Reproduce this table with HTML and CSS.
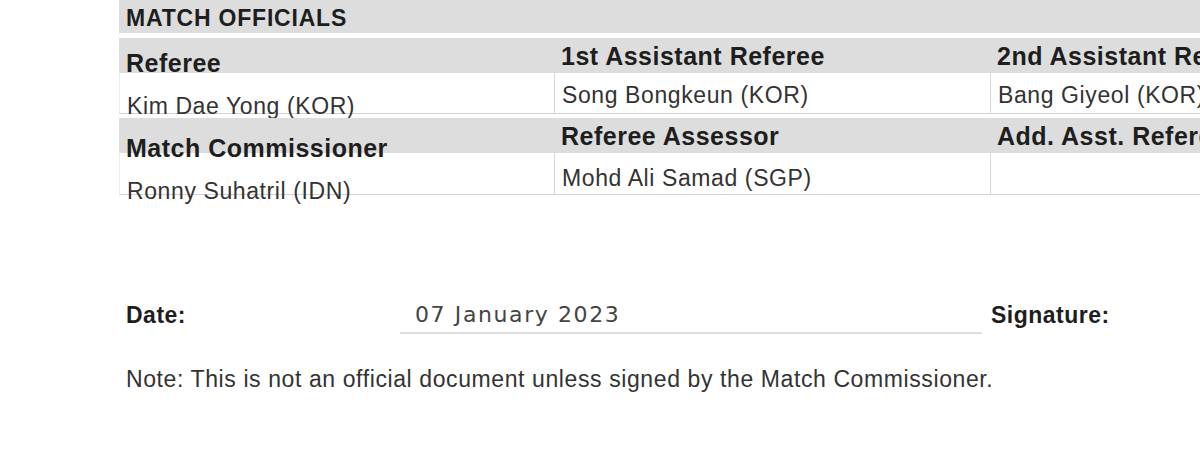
FILE: index.html
```html
<!DOCTYPE html>
<html lang="en">
<head>
<meta charset="utf-8">
<title>Match Officials</title>
<link rel="stylesheet" href="styles.css">
</head>
<body>
<div class="page">
  <div class="sheet">
    <div class="section-title">MATCH OFFICIALS</div>
    <div class="officials officials-first">
      <div class="hd c1">Referee</div>
      <div class="hd">1st Assistant Referee</div>
      <div class="hd">2nd Assistant Referee</div>
      <div class="dt c1">Kim Dae Yong (KOR)</div>
      <div class="dt">Song Bongkeun (KOR)</div>
      <div class="dt">Bang Giyeol (KOR)</div>
    </div>
    <div class="officials officials-second">
      <div class="hd c1">Match Commissioner</div>
      <div class="hd">Referee Assessor</div>
      <div class="hd">Add. Asst. Referee</div>
      <div class="dt c1">Ronny Suhatril (IDN)</div>
      <div class="dt">Mohd Ali Samad (SGP)</div>
      <div class="dt"></div>
    </div>
  </div>

  <div class="sign-row">
    <div class="sign-label">Date:</div>
    <div class="sign-value">07 January 2023</div>
    <div class="sign-label sign-label-right">Signature:</div>
  </div>

  <p class="note">Note: This is not an official document unless signed by the Match Commissioner.</p>
</div>
</body>
</html>
```

FILE: styles.css
```css
html, body {
  margin: 0;
  padding: 0;
  background: #ffffff;
  overflow: hidden;
}

.page {
  width: 1200px;
  height: 461px;
  overflow: hidden;
  font-family: "Liberation Sans", Arial, sans-serif;
  color: #222;
}

.sheet {
  margin-left: 119px;
  width: 1307px;
}

.section-title {
  box-sizing: border-box;
  height: 33px;
  background: #dddddd;
  padding: 7px 0 0 7px;
  font-weight: bold;
  font-size: 23px;
  line-height: 23px;
  letter-spacing: 0.8px;
  color: #1e1e1e;
}

.officials {
  display: grid;
  grid-template-columns: 435px 436px 436px;
}

.officials-first {
  margin-top: 5px;
}

.officials-second {
  margin-top: 4px;
}

.hd {
  box-sizing: border-box;
  height: 35px;
  background: #dddddd;
  padding: 6px 0 0 7px;
  font-weight: bold;
  font-size: 25px;
  line-height: 25px;
  letter-spacing: 0.5px;
  color: #1e1e1e;
  white-space: nowrap;
}

.dt {
  box-sizing: border-box;
  height: 41px;
  padding: 11px 0 0 7px;
  border-left: 1px solid #d6d6d6;
  border-bottom: 1px solid #d2d2d2;
  font-size: 23px;
  line-height: 23px;
  letter-spacing: 0.6px;
  color: #333;
  white-space: nowrap;
}

.officials-second .dt {
  height: 42px;
  padding-top: 14px;
}

.hd.c1 {
  padding-top: 13px;
}

.officials-second .hd.c1 {
  padding-top: 18px;
}

.dt.c1 {
  padding-top: 22px;
  border-left-color: #ececec;
}

.officials-second .dt.c1 {
  padding-top: 27px;
}

.sign-row {
  display: flex;
  align-items: flex-start;
  margin: 105px 0 0 119px;
}

.sign-label {
  box-sizing: border-box;
  width: 281px;
  padding: 2px 0 0 7px;
  font-weight: bold;
  font-size: 23px;
  line-height: 26px;
  letter-spacing: 0.5px;
  color: #1e1e1e;
}

.sign-value {
  box-sizing: border-box;
  width: 582px;
  height: 34px;
  padding: 2px 0 0 15px;
  border-bottom: 2px solid #dedede;
  font-family: "DejaVu Sans", Verdana, sans-serif;
  font-size: 22px;
  line-height: 26px;
  letter-spacing: 1.6px;
  color: #444;
}

.sign-label-right {
  width: auto;
  padding-left: 9px;
}

.note {
  margin: 32px 0 0 126px;
  font-size: 23px;
  line-height: 26px;
  letter-spacing: 0.6px;
  color: #333;
}
```
